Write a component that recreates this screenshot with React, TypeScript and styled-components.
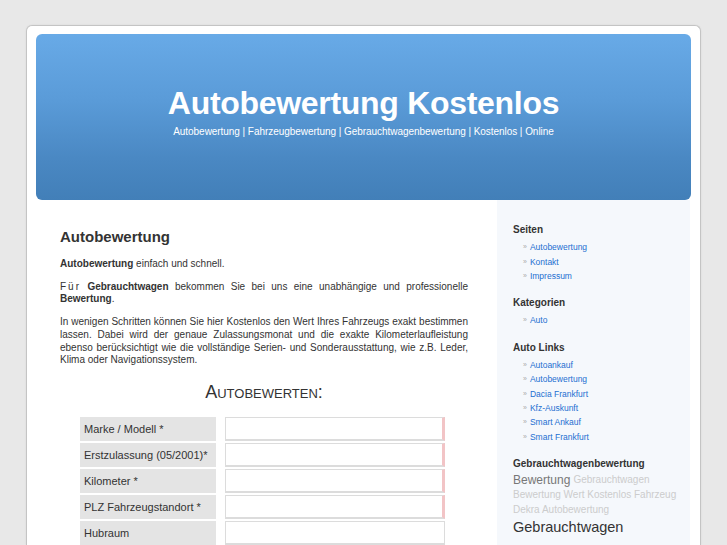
import React from "react";
import styled, { createGlobalStyle } from "styled-components";

const Global = createGlobalStyle`
  html, body { margin: 0; padding: 0; background: #e8e8e8; }
  body { font-family: "Liberation Sans", Arial, sans-serif; color: #333; }
`;

const Page = styled.div`
  padding-top: 25px;
  min-height: 545px;
  box-sizing: border-box;
`;

const Card = styled.div`
  width: 675px;
  margin: 0 auto;
  box-sizing: border-box;
  background: #fff;
  border: 1px solid #c4c4c4;
  border-bottom: none;
  border-radius: 6px 6px 0 0;
  padding: 8px 9px 0 9px;
  box-shadow: 0 0 2px rgba(0,0,0,0.08);
`;

const Header = styled.header`
  height: 166px;
  border-radius: 6px;
  background: linear-gradient(to bottom, #68aae7 0%, #5a9bd8 40%, #4a88c3 75%, #427fb8 100%);
  display: flex;
  flex-direction: column;
  align-items: center;
  padding-top: 51px;
  box-sizing: border-box;
  color: #fff;
`;

const Title = styled.h1`
  margin: 0;
  font-size: 32px;
  font-weight: bold;
  letter-spacing: -0.3px;
  line-height: 36px;
`;

const SubNav = styled.div`
  margin-top: 5px;
  font-size: 10px;
  letter-spacing: -0.05px;
`;

const Body = styled.div`
  display: flex;
  min-height: 345px;
`;

const Main = styled.main`
  width: 461px;
  box-sizing: border-box;
  padding: 28px 29px 0 24px;
  font-size: 10px;
  line-height: 12.7px;
  color: #333;
`;

const H2 = styled.h2`
  margin: 0 0 12px 0;
  font-size: 15px;
  font-weight: bold;
  line-height: 18px;
  color: #333;
`;

const P = styled.p`
  margin: 0 0 10px 0;
  text-align: justify;
`;

const Spaced = styled.span`
  letter-spacing: 2px;
`;

const FormTitle = styled.div`
  text-align: center;
  font-size: 18px;
  font-variant: small-caps;
  color: #333;
  margin: 14px 0 14px 0;
  line-height: 22px;
`;

const FormTable = styled.div`
  display: grid;
  grid-template-columns: 136px 220px;
  column-gap: 9px;
  row-gap: 2px;
  justify-content: center;
  margin-left: -3px;
`;

const Label = styled.div`
  background: #e4e4e4;
  height: 24px;
  display: flex;
  align-items: center;
  padding-left: 4px;
  font-size: 11px;
  color: #333;
`;

const Input = styled.div<{ $required?: boolean }>`
  height: 24px;
  box-sizing: border-box;
  border: 1px solid #dcdcdc;
  border-right: ${(p) => (p.$required ? "3px solid #f2c4c6" : "1px solid #dcdcdc")};
  border-bottom-width: 2px;
  background: #fff;
`;

const Sidebar = styled.aside`
  width: 193px;
  background: #f5f8fc;
  box-sizing: border-box;
  padding: 24px 8px 0 16px;
`;

const SideTitle = styled.h3`
  margin: 0 0 4px 0;
  font-size: 10px;
  font-weight: bold;
  color: #333;
  line-height: 12px;
  height: 12px;
`;

const SideList = styled.ul`
  list-style: none;
  margin: 0 0 14px 0;
  padding: 0 0 0 10px;
`;

const SideItem = styled.li`
  display: flex;
  align-items: center;
  height: 14.4px;
  font-size: 8.5px;
  line-height: 10px;
  &::before {
    content: "»";
    color: #aaa;
    font-size: 7px;
    margin-right: 3px;
  }
`;

const SideLink = styled.a`
  color: #1d6fd1;
  text-decoration: none;
`;

const Cloud = styled.div`
  display: flex;
  flex-direction: column;
  margin-top: -1px;
`;

const CloudLine = styled.div<{ $h: number }>`
  height: ${(p) => p.$h}px;
  display: flex;
  align-items: center;
  gap: 3px;
  white-space: nowrap;
`;

const Tag = styled.span<{ $size: number; $color: string }>`
  font-size: ${(p) => p.$size}px;
  color: ${(p) => p.$color};
  line-height: 1;
`;

const pages = ["Autobewertung", "Kontakt", "Impressum"];
const cats = ["Auto"];
const links = ["Autoankauf", "Autobewertung", "Dacia Frankfurt", "Kfz-Auskunft", "Smart Ankauf", "Smart Frankfurt"];
const fields: [string, boolean][] = [
  ["Marke / Modell *", true],
  ["Erstzulassung (05/2001)*", true],
  ["Kilometer *", true],
  ["PLZ Fahrzeugstandort *", true],
  ["Hubraum", false],
];

export default function App() {
  return (
    <>
      <Global />
      <Page>
        <Card>
          <Header>
            <Title>Autobewertung Kostenlos</Title>
            <SubNav>Autobewertung | Fahrzeugbewertung | Gebrauchtwagenbewertung | Kostenlos | Online</SubNav>
          </Header>
          <Body>
            <Main>
              <H2>Autobewertung</H2>
              <P><b>Autobewertung</b> einfach und schnell.</P>
              <P>
                <Spaced>Für</Spaced> <b>Gebrauchtwagen</b> bekommen Sie bei uns eine unabhängige und professionelle <b>Bewertung</b>.
              </P>
              <P>
                In wenigen Schritten können Sie hier Kostenlos den Wert Ihres Fahrzeugs exakt bestimmen lassen. Dabei wird der genaue Zulassungsmonat und die exakte Kilometerlaufleistung ebenso berücksichtigt wie die vollständige Serien- und Sonderausstattung, wie z.B. Leder, Klima oder Navigationssystem.
              </P>
              <FormTitle>Autobewerten:</FormTitle>
              <FormTable>
                {fields.map(([l, r]) => (
                  <React.Fragment key={l}>
                    <Label>{l}</Label>
                    <Input $required={r} />
                  </React.Fragment>
                ))}
              </FormTable>
            </Main>
            <Sidebar>
              <SideTitle>Seiten</SideTitle>
              <SideList>
                {pages.map((p) => (
                  <SideItem key={p}><SideLink>{p}</SideLink></SideItem>
                ))}
              </SideList>
              <SideTitle>Kategorien</SideTitle>
              <SideList>
                {cats.map((p) => (
                  <SideItem key={p}><SideLink>{p}</SideLink></SideItem>
                ))}
              </SideList>
              <SideTitle>Auto Links</SideTitle>
              <SideList>
                {links.map((p) => (
                  <SideItem key={p}><SideLink>{p}</SideLink></SideItem>
                ))}
              </SideList>
              <SideTitle>Gebrauchtwagenbewertung</SideTitle>
              <Cloud>
                <CloudLine $h={15}>
                  <Tag $size={12} $color="#777">Bewertung</Tag>
                  <Tag $size={10} $color="#ccc">Gebrauchtwagen</Tag>
                </CloudLine>
                <CloudLine $h={14.5}>
                  <Tag $size={10} $color="#ccc">Bewertung Wert Kostenlos Fahrzeug</Tag>
                </CloudLine>
                <CloudLine $h={14.5}>
                  <Tag $size={10} $color="#ccc">Dekra Autobewertung</Tag>
                </CloudLine>
                <CloudLine $h={20}>
                  <Tag $size={14.5} $color="#333">Gebrauchtwagen</Tag>
                </CloudLine>
              </Cloud>
            </Sidebar>
          </Body>
        </Card>
      </Page>
    </>
  );
}
